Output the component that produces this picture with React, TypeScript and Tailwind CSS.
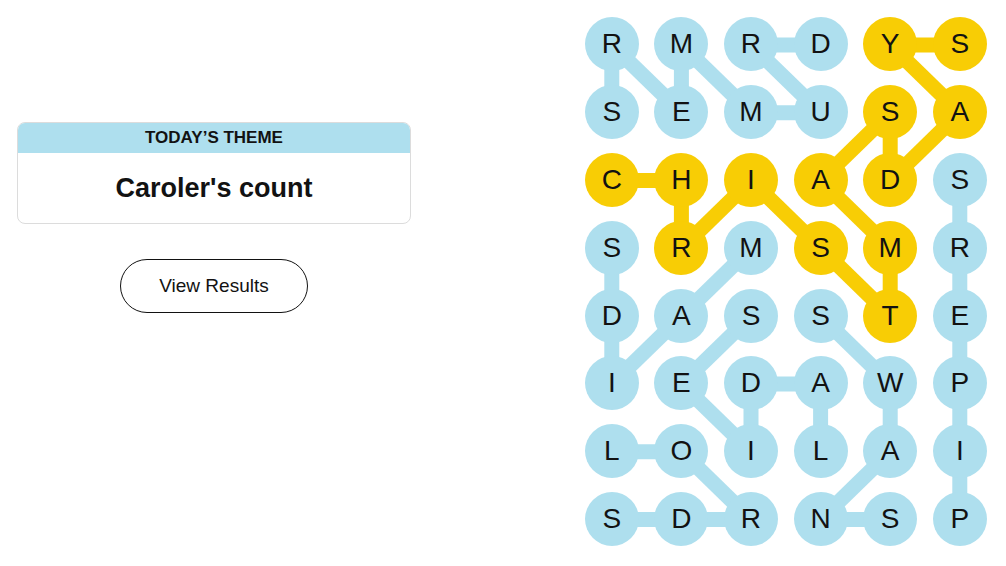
import React from 'react'

const letters = [
  'RMRDYS',
  'SEMUSA',
  'CHIADS',
  'SRMSMR',
  'DASSTE',
  'IEDAWP',
  'LOILAI',
  'SDRNSP',
]

// cells that belong to the spangram
const yellow = new Set([
  '0-4', '0-5', '1-4', '1-5', '2-0', '2-1', '2-2', '2-3', '2-4', '3-1', '3-3', '3-4', '4-4',
])

type Seg = [number, number, number, number]

const blueLines: Seg[] = [
  // drummers
  [0, 0, 1, 0], [0, 0, 1, 1], [0, 1, 1, 1], [0, 1, 1, 2], [1, 2, 1, 3], [0, 2, 1, 3], [0, 2, 0, 3],
  // pipers
  [2, 5, 3, 5], [3, 5, 4, 5], [4, 5, 5, 5], [5, 5, 6, 5], [6, 5, 7, 5],
  // maids
  [3, 0, 4, 0], [4, 0, 5, 0], [5, 0, 4, 1], [4, 1, 3, 2],
  // ladies
  [6, 3, 5, 3], [5, 3, 5, 2], [5, 2, 6, 2], [6, 2, 5, 1], [5, 1, 4, 2],
  // swans
  [4, 3, 5, 4], [5, 4, 6, 4], [6, 4, 7, 3], [7, 3, 7, 4],
  // lords
  [6, 0, 6, 1], [6, 1, 7, 2], [7, 2, 7, 1], [7, 1, 7, 0],
]

const yellowLines: Seg[] = [
  [2, 0, 2, 1], [2, 1, 3, 1], [3, 1, 2, 2], [2, 2, 3, 3], [3, 3, 4, 4], [4, 4, 3, 4],
  [3, 4, 2, 3], [2, 3, 1, 4], [1, 4, 2, 4], [2, 4, 1, 5], [1, 5, 0, 4], [0, 4, 0, 5],
]

const CW = 69.6
const CH = 67.8
const cx = (c: number) => CW / 2 + CW * c
const cy = (r: number) => CH / 2 + CH * r

function Board() {
  return (
    <div className="relative w-[417.6px] h-[542.4px]">
      <svg className="absolute inset-0" width="417.6" height="542.4">
        {blueLines.map(([r1, c1, r2, c2], i) => (
          <line key={'b' + i} x1={cx(c1)} y1={cy(r1)} x2={cx(c2)} y2={cy(r2)} stroke="#aedfee" strokeWidth={15} />
        ))}
        {yellowLines.map(([r1, c1, r2, c2], i) => (
          <line key={'y' + i} x1={cx(c1)} y1={cy(r1)} x2={cx(c2)} y2={cy(r2)} stroke="#f8cd05" strokeWidth={15} />
        ))}
      </svg>
      <div className="relative grid grid-cols-[repeat(6,69.6px)] grid-rows-[repeat(8,67.8px)]">
        {letters.map((row, r) =>
          row.split('').map((ch, c) => (
            <div key={r + '-' + c} className="flex items-center justify-center">
              <div
                className={
                  'w-[54px] h-[54px] rounded-full flex items-center justify-center text-[28px] text-[#121212] ' +
                  (yellow.has(r + '-' + c) ? 'bg-[#f8cd05]' : 'bg-[#aedfee]')
                }
              >
                {ch}
              </div>
            </div>
          ))
        )}
      </div>
    </div>
  )
}

export default function App() {
  return (
    <div className="w-[1006px] h-[566px] bg-white flex font-['Liberation_Sans',Arial,sans-serif] text-[#121212]">
      <div className="w-[428px] px-[17px] pt-[122px] flex flex-col items-center">
        <div className="w-full rounded-lg border border-[#dcdcdc] overflow-hidden">
          <div className="h-[30px] bg-[#aedfee] flex items-center justify-center text-[17px] font-bold uppercase">
            Today’s Theme
          </div>
          <div className="h-[70px] flex items-center justify-center text-[27px] font-bold">
            Caroler's count
          </div>
        </div>
        <button className="mt-[35px] w-[188px] h-[54px] rounded-full border border-[#121212] text-[19px]">
          View Results
        </button>
      </div>
      <div className="ml-[149px] pt-[10.6px]">
        <Board />
      </div>
    </div>
  )
}
